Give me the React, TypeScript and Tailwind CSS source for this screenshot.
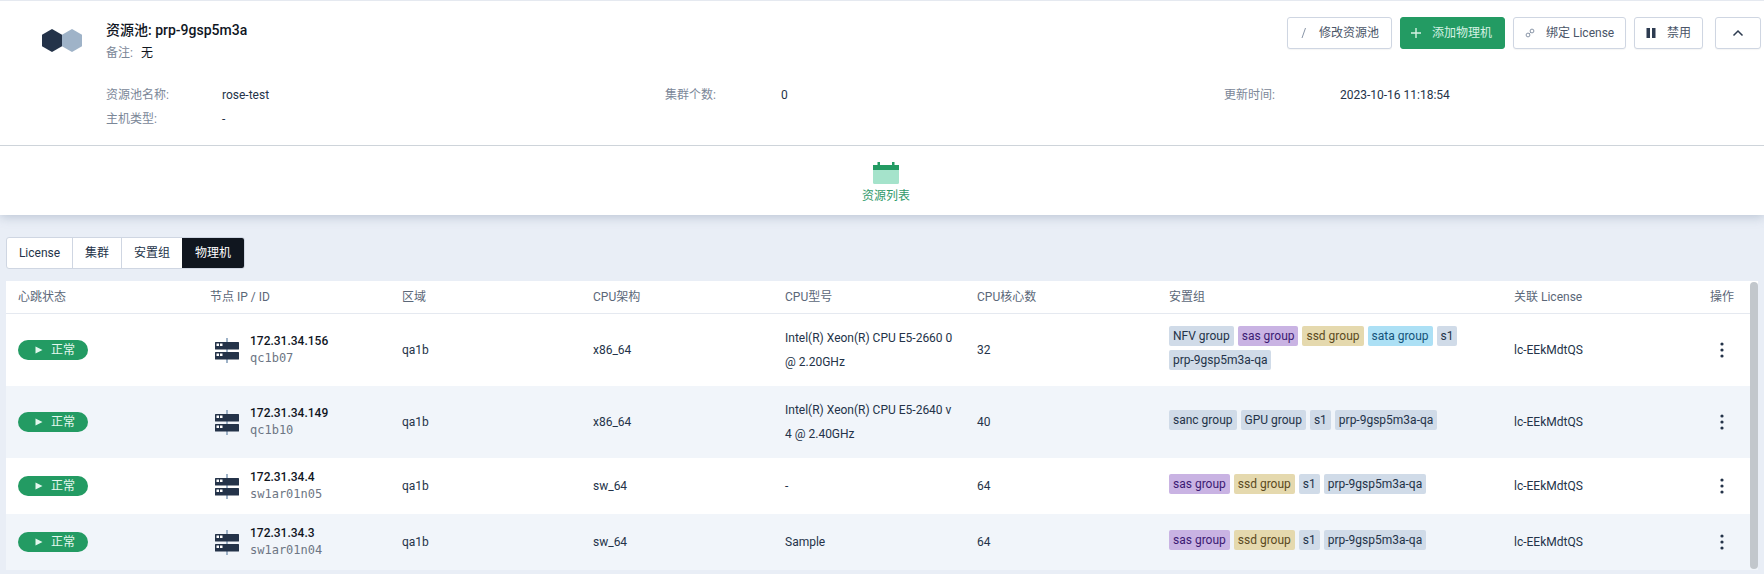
import React from "react";

const font = "font-['Roboto','Noto_Sans_CJK_SC',sans-serif]";

function Hex() {
  return (
    <svg width="40" height="23" viewBox="0 0 40 23" className="block">
      <path d="M30 0 L40 5.8 V17.2 L30 23 L20 17.2 V5.8 Z" fill="#9fb3c8" />
      <path d="M10 0 L20 5.8 V17.2 L10 23 L0 17.2 V5.8 Z" fill="#243349" />
    </svg>
  );
}

function ServerIcon() {
  return (
    <svg width="24" height="25" viewBox="0 0 24 25" className="block shrink-0">
      <rect x="11" y="0" width="2" height="25" fill="#9fb3c8" />
      <rect x="0" y="4" width="24" height="7.5" rx="0.5" fill="#243349" />
      <rect x="0" y="14" width="24" height="7.5" rx="0.5" fill="#243349" />
      <rect x="1.5" y="5.5" width="2.5" height="2.5" fill="#fff" />
      <rect x="5" y="5.5" width="2.5" height="2.5" fill="#fff" />
      <rect x="1.5" y="15.5" width="2.5" height="2.5" fill="#fff" />
      <rect x="5" y="15.5" width="2.5" height="2.5" fill="#fff" />
    </svg>
  );
}

function Btn({ icon, label, cls }: { icon: React.ReactNode; label: string; cls: string }) {
  return (
    <button className={`h-8 flex items-center justify-start rounded-[3px] text-xs border ${cls}`}>
      <span className="w-4 mr-2 flex items-center justify-center">{icon}</span>
      {label}
    </button>
  );
}

const white = "bg-white border-[#cfd6e2] text-[#4a5568] shadow-[0_1px_1px_rgba(0,0,0,0.04)]";

const tagStyle: Record<string, string> = {
  g: "bg-[#d0dbe8] text-[#243349]",
  p: "bg-[#c9b3e3] text-[#3c1a73]",
  y: "bg-[#e5d9ae] text-[#5b4a1e]",
  b: "bg-[#ace0f5] text-[#14537a]",
};

type Row = {
  ip: string;
  id: string;
  arch: string;
  cpu: string;
  cores: string;
  tags: [string, string][];
  h: string;
  even: boolean;
};

const rows: Row[] = [
  {
    ip: "172.31.34.156",
    id: "qc1b07",
    arch: "x86_64",
    cpu: "Intel(R) Xeon(R) CPU E5-2660 0 @ 2.20GHz",
    cores: "32",
    tags: [["NFV group", "g"], ["sas group", "p"], ["ssd group", "y"], ["sata group", "b"], ["s1", "g"], ["prp-9gsp5m3a-qa", "g"]],
    h: "h-[72px]",
    even: false,
  },
  {
    ip: "172.31.34.149",
    id: "qc1b10",
    arch: "x86_64",
    cpu: "Intel(R) Xeon(R) CPU E5-2640 v4 @ 2.40GHz",
    cores: "40",
    tags: [["sanc group", "g"], ["GPU group", "g"], ["s1", "g"], ["prp-9gsp5m3a-qa", "g"]],
    h: "h-[72px]",
    even: true,
  },
  {
    ip: "172.31.34.4",
    id: "sw1ar01n05",
    arch: "sw_64",
    cpu: "-",
    cores: "64",
    tags: [["sas group", "p"], ["ssd group", "y"], ["s1", "g"], ["prp-9gsp5m3a-qa", "g"]],
    h: "h-14",
    even: false,
  },
  {
    ip: "172.31.34.3",
    id: "sw1ar01n04",
    arch: "sw_64",
    cpu: "Sample",
    cores: "64",
    tags: [["sas group", "p"], ["ssd group", "y"], ["s1", "g"], ["prp-9gsp5m3a-qa", "g"]],
    h: "h-14",
    even: true,
  },
];

const cols = "grid grid-cols-[192px_192px_191px_192px_192px_192px_345px_1fr]";

export default function App() {
  return (
    <div className={`${font} w-[1764px] h-[574px] overflow-hidden bg-[#e9eef6] text-xs text-[#243349]`}>
      <div className="bg-white border-t border-[#e5e9f0] shadow-[0_2px_10px_rgba(100,120,150,0.35)] relative">
        <div className="h-[145px] border-b border-[#ced4da] flex flex-col">
          <div className="flex pt-[16px] pr-[3px]">
            <div className="pl-[42px] pt-[12px] w-[106px] shrink-0">
              <Hex />
            </div>
            <div className="flex-1 pt-[3px]">
              <div className="text-sm font-medium leading-[20px] text-[#10161f]">资源池: prp-9gsp5m3a</div>
              <div className="mt-[3px] leading-[20px]">
                <span className="text-[#7b8798]">备注:</span>
                <span className="ml-2 text-[#10161f]">无</span>
              </div>
            </div>
            <div className="flex gap-2 h-8">
              <Btn cls={`${white} w-[105px] pl-[7px]`} label="修改资源池" icon={<svg width="12" height="12" viewBox="0 0 12 12"><path d="M8.5 1 L5 11" stroke="#8a96a8" strokeWidth="1" /></svg>} />
              <Btn cls="bg-[#239b63] border-[#239b63] text-[#d5f2e3] w-[105px] pl-[7px]" label="添加物理机" icon={<svg width="12" height="12" viewBox="0 0 12 12"><path d="M6 1 V11 M1 6 H11" stroke="#d5f2e3" strokeWidth="1.4" /></svg>} />
              <Btn cls={`${white} w-[113px] pl-2`} label="绑定 License" icon={<svg width="10" height="10" viewBox="0 0 10 10"><path d="M4.2 5.8 L5.8 4.2" stroke="#8a96a8" strokeWidth="1" /><circle cx="3" cy="7" r="1.9" fill="none" stroke="#8a96a8" strokeWidth="1" /><circle cx="7" cy="3" r="1.9" fill="none" stroke="#8a96a8" strokeWidth="1" /></svg>} />
              <Btn cls={`${white} w-[69px] pl-2`} label="禁用" icon={<svg width="10" height="10" viewBox="0 0 10 10"><rect x="0.5" width="3.5" height="10" fill="#2d3b50" /><rect x="6" width="3.5" height="10" fill="#2d3b50" /></svg>} />
              <button className={`h-8 w-[46px] ml-1 flex items-center justify-center rounded-[3px] border ${white}`}>
                <svg width="12" height="8" viewBox="0 0 12 8"><path d="M1.5 6.5 L6 2 L10.5 6.5" fill="none" stroke="#2d3b50" strokeWidth="1.5" /></svg>
              </button>
            </div>
          </div>
          <div className="pl-[106px] mt-[20px] grid grid-cols-[559px_559px_1fr] leading-[24px]">
            <div className="flex"><span className="w-[116px] text-[#7b8798]">资源池名称:</span><span>rose-test</span></div>
            <div className="flex"><span className="w-[116px] text-[#7b8798]">集群个数:</span><span>0</span></div>
            <div className="flex"><span className="w-[116px] text-[#7b8798]">更新时间:</span><span>2023-10-16 11:18:54</span></div>
            <div className="flex"><span className="w-[116px] text-[#7b8798]">主机类型:</span><span>-</span></div>
          </div>
        </div>
        <div className="h-[69px] flex flex-col items-center pt-[16px] pl-2">
          <svg width="26" height="22" viewBox="0 0 26 22" className="block">
            <rect x="0" y="6" width="26" height="16" rx="1.5" fill="#a5e3cb" />
            <path d="M0 3 H26 V8 H0 Z" fill="#239b63" />
            <rect x="4.5" y="0" width="2.5" height="5" fill="#239b63" />
            <rect x="19" y="0" width="2.5" height="5" fill="#239b63" />
          </svg>
          <div className="mt-[4px] text-[#2f9a6a] leading-[16px]">资源列表</div>
        </div>
      </div>

      <div className="pl-[6px] pr-[6px] pt-[22px] relative">
        <div className="flex h-8 text-xs w-fit rounded-[3px] overflow-hidden border border-[#cfd6e2] bg-white">
          <div className="w-[66px] flex items-center justify-center border-r border-[#cfd6e2]">License</div>
          <div className="w-[49px] flex items-center justify-center border-r border-[#cfd6e2]">集群</div>
          <div className="w-[60px] flex items-center justify-center">安置组</div>
          <div className="w-[62px] flex items-center justify-center bg-[#10161f] text-white">物理机</div>
        </div>

        <div className="mt-[12px] bg-white relative">
          <div className={`${cols} h-[33px] items-center border-b border-[#e5e9f0] text-[#5b6778] pl-3`}>
            <div>心跳状态</div>
            <div>节点 IP / ID</div>
            <div>区域</div>
            <div>CPU架构</div>
            <div>CPU型号</div>
            <div>CPU核心数</div>
            <div>安置组</div>
            <div className="flex justify-between pr-[24px]"><span>关联 License</span><span>操作</span></div>
          </div>
          {rows.map((r) => (
            <div key={r.ip} className={`${cols} ${r.h} items-center pl-3 ${r.even ? "bg-[#f1f5fa]" : "bg-white"}`}>
              <div>
                <div className="w-[70px] h-5 rounded-full bg-[#239b63] text-[#e4f7ee] flex items-center pl-[17px] gap-2">
                  <svg width="8" height="8" viewBox="0 0 8 8"><path d="M0.5 0.5 L7.5 4 L0.5 7.5 Z" fill="#e4f7ee" /></svg>
                  <span>正常</span>
                </div>
              </div>
              <div className="flex items-center pl-[5px]">
                <ServerIcon />
                <div className="ml-[11px]">
                  <div className="font-medium text-[#10161f] leading-[16px]">{r.ip}</div>
                  <div className="font-['DejaVu_Sans_Mono',monospace] text-[#6d7684] leading-[17px] mt-[1px]">{r.id}</div>
                </div>
              </div>
              <div>qa1b</div>
              <div>{r.arch}</div>
              <div className="leading-6 pr-5 break-all">{r.cpu}</div>
              <div>{r.cores}</div>
              <div className="flex flex-wrap pr-10">
                {r.tags.map(([t, c]) => (
                  <span key={t} className={`h-5 leading-5 px-[4px] mr-1 mb-1 rounded-[2px] ${tagStyle[c]}`}>{t}</span>
                ))}
              </div>
              <div className="flex items-center justify-between pr-[34px]">
                <span>lc-EEkMdtQS</span>
                <svg width="4" height="16" viewBox="0 0 4 16" className="block"><circle cx="2" cy="2" r="1.6" fill="#243349" /><circle cx="2" cy="8" r="1.6" fill="#243349" /><circle cx="2" cy="14" r="1.6" fill="#243349" /></svg>
              </div>
            </div>
          ))}
          <div className="absolute right-0 top-[1px] bottom-[1px] w-2 rounded-full bg-[#c2c7cc]" />
        </div>
      </div>
    </div>
  );
}
